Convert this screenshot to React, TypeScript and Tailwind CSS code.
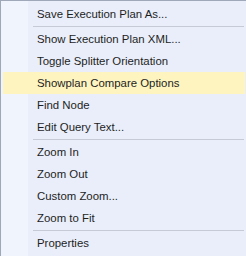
const items: (string | null)[] = [
  "Save Execution Plan As...",
  null,
  "Show Execution Plan XML...",
  "Toggle Splitter Orientation",
  "Showplan Compare Options",
  "Find Node",
  "Edit Query Text...",
  null,
  "Zoom In",
  "Zoom Out",
  "Custom Zoom...",
  "Zoom to Fit",
  null,
  "Properties",
];

const App = () => {
  return (
    <div className="w-[246px] h-[256px] overflow-hidden bg-[#e9eefa]">
      <div
        className="w-[247px] h-[260px] border-l border-t border-[#9ea8b8] px-[2px] pt-[2px] bg-[linear-gradient(to_right,#f0f4fd_27px,#e9eefa_27px)] text-[11.4px] text-[#1e1e1e]"
        style={{ fontFamily: '"Segoe UI", "Liberation Sans", sans-serif' }}
      >
        {items.map((label, i) =>
          label === null ? (
            <div key={i} className="h-[3px] flex items-center pl-[30px] pr-[1px]">
              <div className="h-px w-full bg-[#c5cad6]" />
            </div>
          ) : (
            <div
              key={i}
              className={
                "h-[22px] flex items-center pl-[34px] pt-[1px] whitespace-nowrap " +
                (label === "Showplan Compare Options" ? "bg-[#fdf4bf]" : "")
              }
            >
              {label}
            </div>
          )
        )}
      </div>
    </div>
  );
};

export default App;
